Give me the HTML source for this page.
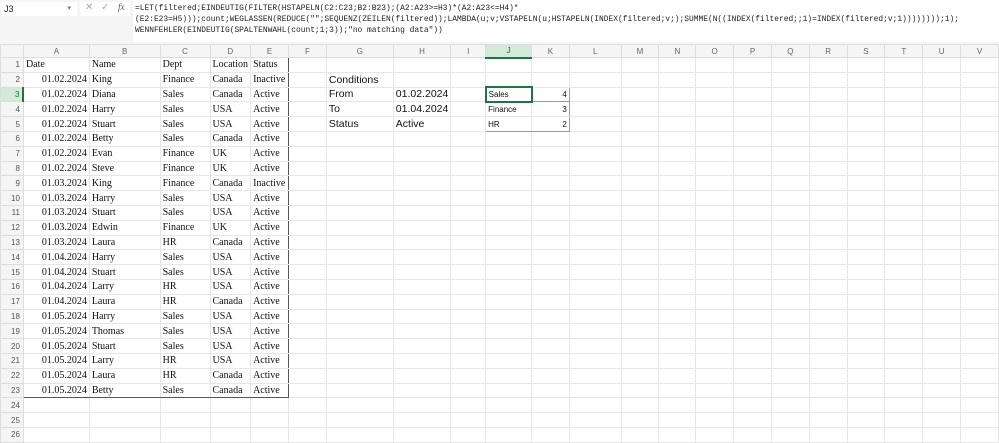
<!DOCTYPE html>
<html><head><style>
*{margin:0;padding:0;box-sizing:border-box}
body{width:999px;height:441px;overflow:hidden;background:#fff;position:relative;font-family:"Liberation Sans",sans-serif}
#top{position:absolute;left:0;top:0;width:999px;height:44px;background:#f5f5f5}
#nb{position:absolute;left:1px;top:2px;width:76px;height:14px;background:#fff;font-size:9px;padding:2px 3px;color:#222}
#nb span{position:absolute;right:6px;top:2px;font-size:7px;color:#777}
#ic{position:absolute;left:80px;top:2px;width:50px;height:14px;background:#fff;font-size:10px;color:#aaa}
#fx{position:absolute;left:133px;top:0;width:866px;height:42px;background:#fff}
#fx div{position:absolute;left:2px;font-family:"Liberation Mono",monospace;font-size:7.9px;color:#222;white-space:pre}
table{position:absolute;left:0;top:44px;border-collapse:collapse;table-layout:fixed}
td{height:14.8px;border:1px solid #e6e6e6;font-size:9.6px;white-space:nowrap;overflow:visible;padding:0 2px;color:#111}
tr.h td{height:13px;background:#f5f5f5;color:#666;font-size:8px;text-align:center;border-color:#ddd}
td.r{background:#f5f5f5;color:#555;font-size:8px;text-align:right;padding-right:3px;border-color:#ddd}
.s{font-family:"Liberation Serif",serif;font-size:10px}
.n{text-align:right}
.ss{font-size:10.5px}
.sm{font-size:8px}
</style></head><body>
<div id="top"></div>
<div id="nb">J3<span>▾</span></div>
<div id="ic"><span style="position:absolute;left:5px;top:0">✕</span><span style="position:absolute;left:21px;top:0">✓</span><span style="position:absolute;left:38px;top:0;font-style:italic;font-family:'Liberation Serif',serif;color:#555;font-size:9px">fx</span></div>
<div id="fx">
<div style="top:4px">=LET(filtered;EINDEUTIG(FILTER(HSTAPELN(C2:C23;B2:B23);(A2:A23&gt;=H3)*(A2:A23&lt;=H4)*</div>
<div style="top:15px">(E2:E23=H5)));count;WEGLASSEN(REDUCE("";SEQUENZ(ZEILEN(filtered));LAMBDA(u;v;VSTAPELN(u;HSTAPELN(INDEX(filtered;v;);SUMME(N((INDEX(filtered;;1)=INDEX(filtered;v;1))))))));1);</div>
<div style="top:26px">WENNFEHLER(EINDEUTIG(SPALTENWAHL(count;1;3));"no matching data"))</div>
</div>
<table>
<colgroup><col style="width:23px"><col style="width:66px"><col style="width:71px"><col style="width:50px"><col style="width:37px"><col style="width:38px"><col style="width:38px"><col style="width:67px"><col style="width:57px"><col style="width:35px"><col style="width:46px"><col style="width:38px"><col style="width:52px"><col style="width:38px"><col style="width:37px"><col style="width:38px"><col style="width:38px"><col style="width:38px"><col style="width:38px"><col style="width:38px"><col style="width:38px"><col style="width:38px"><col style="width:38px"></colgroup>
<tr class="h"><td></td><td>A</td><td>B</td><td>C</td><td>D</td><td>E</td><td>F</td><td>G</td><td>H</td><td>I</td><td style="background:#d3ead9;color:#1f6e3d;border-bottom:2px solid #217346">J</td><td>K</td><td>L</td><td>M</td><td>N</td><td>O</td><td>P</td><td>Q</td><td>R</td><td>S</td><td>T</td><td>U</td><td>V</td></tr>
<tr><td class="r">1</td><td class="s">Date</td><td class="s">Name</td><td class="s">Dept</td><td class="s">Location</td><td class="s" style="border-right:1.5px solid #555">Status</td><td></td><td></td><td></td><td></td><td></td><td></td><td></td><td></td><td></td><td></td><td></td><td></td><td></td><td></td><td></td><td></td><td></td></tr>
<tr><td class="r">2</td><td class="s n">01.02.2024</td><td class="s">King</td><td class="s">Finance</td><td class="s">Canada</td><td class="s" style="border-right:1.5px solid #555">Inactive</td><td></td><td class="ss">Conditions</td><td></td><td></td><td></td><td></td><td></td><td></td><td></td><td></td><td></td><td></td><td></td><td></td><td></td><td></td><td></td></tr>
<tr><td class="r" style="background:#d3ead9;color:#1f6e3d;border-right:2px solid #217346">3</td><td class="s n">01.02.2024</td><td class="s">Diana</td><td class="s">Sales</td><td class="s">Canada</td><td class="s" style="border-right:1.5px solid #555">Active</td><td></td><td class="ss">From</td><td class="ss n">01.02.2024</td><td></td><td class="sm" style="border:2px solid #217346">Sales</td><td class="sm n" style="border:1px solid #7a9fd9;border-left:none">4</td><td></td><td></td><td></td><td></td><td></td><td></td><td></td><td></td><td></td><td></td><td></td></tr>
<tr><td class="r">4</td><td class="s n">01.02.2024</td><td class="s">Harry</td><td class="s">Sales</td><td class="s">USA</td><td class="s" style="border-right:1.5px solid #555">Active</td><td></td><td class="ss">To</td><td class="ss n">01.04.2024</td><td></td><td class="sm" style="border-left:1px solid #7a9fd9;border-bottom-color:#e3e3e3">Finance</td><td class="sm n" style="border-right:1px solid #7a9fd9">3</td><td></td><td></td><td></td><td></td><td></td><td></td><td></td><td></td><td></td><td></td><td></td></tr>
<tr><td class="r">5</td><td class="s n">01.02.2024</td><td class="s">Stuart</td><td class="s">Sales</td><td class="s">USA</td><td class="s" style="border-right:1.5px solid #555">Active</td><td></td><td class="ss">Status</td><td class="ss">Active</td><td></td><td class="sm" style="border-left:1px solid #7a9fd9;border-bottom:1px solid #7a9fd9">HR</td><td class="sm n" style="border-right:1px solid #7a9fd9;border-bottom:1px solid #7a9fd9">2</td><td></td><td></td><td></td><td></td><td></td><td></td><td></td><td></td><td></td><td></td><td></td></tr>
<tr><td class="r">6</td><td class="s n">01.02.2024</td><td class="s">Betty</td><td class="s">Sales</td><td class="s">Canada</td><td class="s" style="border-right:1.5px solid #555">Active</td><td></td><td></td><td></td><td></td><td></td><td></td><td></td><td></td><td></td><td></td><td></td><td></td><td></td><td></td><td></td><td></td><td></td></tr>
<tr><td class="r">7</td><td class="s n">01.02.2024</td><td class="s">Evan</td><td class="s">Finance</td><td class="s">UK</td><td class="s" style="border-right:1.5px solid #555">Active</td><td></td><td></td><td></td><td></td><td></td><td></td><td></td><td></td><td></td><td></td><td></td><td></td><td></td><td></td><td></td><td></td><td></td></tr>
<tr><td class="r">8</td><td class="s n">01.02.2024</td><td class="s">Steve</td><td class="s">Finance</td><td class="s">UK</td><td class="s" style="border-right:1.5px solid #555">Active</td><td></td><td></td><td></td><td></td><td></td><td></td><td></td><td></td><td></td><td></td><td></td><td></td><td></td><td></td><td></td><td></td><td></td></tr>
<tr><td class="r">9</td><td class="s n">01.03.2024</td><td class="s">King</td><td class="s">Finance</td><td class="s">Canada</td><td class="s" style="border-right:1.5px solid #555">Inactive</td><td></td><td></td><td></td><td></td><td></td><td></td><td></td><td></td><td></td><td></td><td></td><td></td><td></td><td></td><td></td><td></td><td></td></tr>
<tr><td class="r">10</td><td class="s n">01.03.2024</td><td class="s">Harry</td><td class="s">Sales</td><td class="s">USA</td><td class="s" style="border-right:1.5px solid #555">Active</td><td></td><td></td><td></td><td></td><td></td><td></td><td></td><td></td><td></td><td></td><td></td><td></td><td></td><td></td><td></td><td></td><td></td></tr>
<tr><td class="r">11</td><td class="s n">01.03.2024</td><td class="s">Stuart</td><td class="s">Sales</td><td class="s">USA</td><td class="s" style="border-right:1.5px solid #555">Active</td><td></td><td></td><td></td><td></td><td></td><td></td><td></td><td></td><td></td><td></td><td></td><td></td><td></td><td></td><td></td><td></td><td></td></tr>
<tr><td class="r">12</td><td class="s n">01.03.2024</td><td class="s">Edwin</td><td class="s">Finance</td><td class="s">UK</td><td class="s" style="border-right:1.5px solid #555">Active</td><td></td><td></td><td></td><td></td><td></td><td></td><td></td><td></td><td></td><td></td><td></td><td></td><td></td><td></td><td></td><td></td><td></td></tr>
<tr><td class="r">13</td><td class="s n">01.03.2024</td><td class="s">Laura</td><td class="s">HR</td><td class="s">Canada</td><td class="s" style="border-right:1.5px solid #555">Active</td><td></td><td></td><td></td><td></td><td></td><td></td><td></td><td></td><td></td><td></td><td></td><td></td><td></td><td></td><td></td><td></td><td></td></tr>
<tr><td class="r">14</td><td class="s n">01.04.2024</td><td class="s">Harry</td><td class="s">Sales</td><td class="s">USA</td><td class="s" style="border-right:1.5px solid #555">Active</td><td></td><td></td><td></td><td></td><td></td><td></td><td></td><td></td><td></td><td></td><td></td><td></td><td></td><td></td><td></td><td></td><td></td></tr>
<tr><td class="r">15</td><td class="s n">01.04.2024</td><td class="s">Stuart</td><td class="s">Sales</td><td class="s">USA</td><td class="s" style="border-right:1.5px solid #555">Active</td><td></td><td></td><td></td><td></td><td></td><td></td><td></td><td></td><td></td><td></td><td></td><td></td><td></td><td></td><td></td><td></td><td></td></tr>
<tr><td class="r">16</td><td class="s n">01.04.2024</td><td class="s">Larry</td><td class="s">HR</td><td class="s">USA</td><td class="s" style="border-right:1.5px solid #555">Active</td><td></td><td></td><td></td><td></td><td></td><td></td><td></td><td></td><td></td><td></td><td></td><td></td><td></td><td></td><td></td><td></td><td></td></tr>
<tr><td class="r">17</td><td class="s n">01.04.2024</td><td class="s">Laura</td><td class="s">HR</td><td class="s">Canada</td><td class="s" style="border-right:1.5px solid #555">Active</td><td></td><td></td><td></td><td></td><td></td><td></td><td></td><td></td><td></td><td></td><td></td><td></td><td></td><td></td><td></td><td></td><td></td></tr>
<tr><td class="r">18</td><td class="s n">01.05.2024</td><td class="s">Harry</td><td class="s">Sales</td><td class="s">USA</td><td class="s" style="border-right:1.5px solid #555">Active</td><td></td><td></td><td></td><td></td><td></td><td></td><td></td><td></td><td></td><td></td><td></td><td></td><td></td><td></td><td></td><td></td><td></td></tr>
<tr><td class="r">19</td><td class="s n">01.05.2024</td><td class="s">Thomas</td><td class="s">Sales</td><td class="s">USA</td><td class="s" style="border-right:1.5px solid #555">Active</td><td></td><td></td><td></td><td></td><td></td><td></td><td></td><td></td><td></td><td></td><td></td><td></td><td></td><td></td><td></td><td></td><td></td></tr>
<tr><td class="r">20</td><td class="s n">01.05.2024</td><td class="s">Stuart</td><td class="s">Sales</td><td class="s">USA</td><td class="s" style="border-right:1.5px solid #555">Active</td><td></td><td></td><td></td><td></td><td></td><td></td><td></td><td></td><td></td><td></td><td></td><td></td><td></td><td></td><td></td><td></td><td></td></tr>
<tr><td class="r">21</td><td class="s n">01.05.2024</td><td class="s">Larry</td><td class="s">HR</td><td class="s">USA</td><td class="s" style="border-right:1.5px solid #555">Active</td><td></td><td></td><td></td><td></td><td></td><td></td><td></td><td></td><td></td><td></td><td></td><td></td><td></td><td></td><td></td><td></td><td></td></tr>
<tr><td class="r">22</td><td class="s n">01.05.2024</td><td class="s">Laura</td><td class="s">HR</td><td class="s">Canada</td><td class="s" style="border-right:1.5px solid #555">Active</td><td></td><td></td><td></td><td></td><td></td><td></td><td></td><td></td><td></td><td></td><td></td><td></td><td></td><td></td><td></td><td></td><td></td></tr>
<tr><td class="r">23</td><td class="s n" style="border-bottom:1.5px solid #555">01.05.2024</td><td class="s" style="border-bottom:1.5px solid #555">Betty</td><td class="s" style="border-bottom:1.5px solid #555">Sales</td><td class="s" style="border-bottom:1.5px solid #555">Canada</td><td class="s" style="border-right:1.5px solid #555;border-bottom:1.5px solid #555">Active</td><td></td><td></td><td></td><td></td><td></td><td></td><td></td><td></td><td></td><td></td><td></td><td></td><td></td><td></td><td></td><td></td><td></td></tr>
<tr><td class="r">24</td><td></td><td></td><td></td><td></td><td></td><td></td><td></td><td></td><td></td><td></td><td></td><td></td><td></td><td></td><td></td><td></td><td></td><td></td><td></td><td></td><td></td><td></td></tr>
<tr><td class="r">25</td><td></td><td></td><td></td><td></td><td></td><td></td><td></td><td></td><td></td><td></td><td></td><td></td><td></td><td></td><td></td><td></td><td></td><td></td><td></td><td></td><td></td><td></td></tr>
<tr><td class="r">26</td><td></td><td></td><td></td><td></td><td></td><td></td><td></td><td></td><td></td><td></td><td></td><td></td><td></td><td></td><td></td><td></td><td></td><td></td><td></td><td></td><td></td><td></td></tr>
</table>
</body></html>
